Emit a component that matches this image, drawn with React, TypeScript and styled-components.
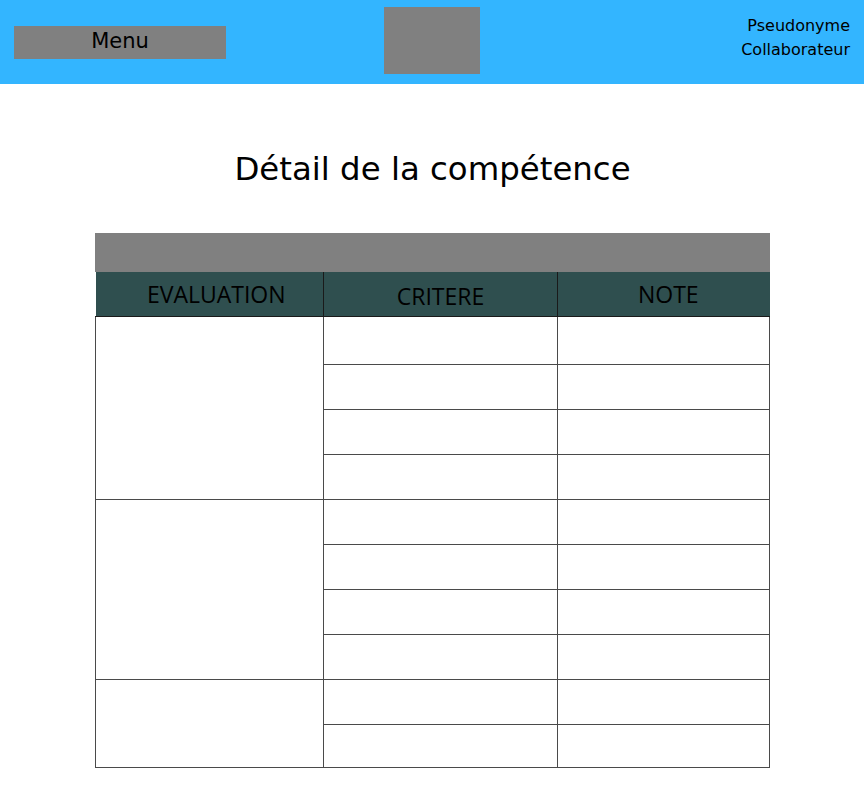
import React from "react";
import styled, { createGlobalStyle } from "styled-components";

const Global = createGlobalStyle`
  html, body { margin: 0; padding: 0; background: #ffffff; }
  body { font-family: "DejaVu Sans", sans-serif; color: #000; }
`;

const TopBar = styled.header`
  display: grid;
  grid-template-columns: 1fr auto 1fr;
  align-items: center;
  height: 84px;
  width: 864px;
  padding: 0 14px;
  box-sizing: border-box;
  background: #33b5ff;
`;

const MenuButton = styled.div`
  justify-self: start;
  width: 212px;
  height: 33px;
  padding-bottom: 3px;
  box-sizing: border-box;
  background: #808080;
  display: flex;
  align-items: center;
  justify-content: center;
  font-size: 21px;
  color: #000;
`;

const LogoBox = styled.div`
  width: 96px;
  height: 67px;
  margin-top: -3px;
  background: #808080;
`;

const UserInfo = styled.div`
  justify-self: end;
  text-align: right;
  font-size: 16px;
  line-height: 24px;
  margin-top: -8px;
`;

const Main = styled.main`
  padding-top: 67px;
`;

const Title = styled.h1`
  margin: 0;
  text-align: center;
  font-size: 32.4px;
  font-weight: normal;
  line-height: 37px;
`;

const Table = styled.table`
  margin: 45px 0 0 95px;
  width: 674px;
  border-collapse: collapse;
  table-layout: fixed;
`;

const Bar = styled.caption`
  height: 39px;
  background: #808080;
`;

const HeadCell = styled.th<{ $w: number; $dy: number; $dx: number }>`
  width: ${(p) => p.$w}px;
  height: 44px;
  padding: ${(p) => p.$dy}px 0 0 ${(p) => p.$dx}px;
  box-sizing: border-box;
  background: #2f4f4f;
  font-family: "Open Sans", sans-serif;
  font-weight: normal;
  font-size: 23px;
  color: #000;
  text-align: center;
  border-left: 1px solid #1a1a1a;
  border-bottom: 1px solid #1a1a1a;
  &:first-child { border-left: none; }
`;

const Cell = styled.td<{ $h: number }>`
  height: ${(p) => p.$h}px;
  padding: 0;
  box-sizing: border-box;
  border: 1px solid #4a4a4a;
`;

type Group = { heights: number[] };
const groups: Group[] = [
  { heights: [48, 45, 45, 45] },
  { heights: [45, 45, 45, 45] },
  { heights: [45, 43] },
];

export default function App() {
  return (
    <>
      <Global />
      <TopBar>
        <MenuButton>Menu</MenuButton>
        <LogoBox />
        <UserInfo>
          <div>Pseudonyme</div>
          <div>Collaborateur</div>
        </UserInfo>
      </TopBar>
      <Main>
        <Title>Détail de la compétence</Title>
        <Table>
          <Bar />
          <thead>
            <tr>
              <HeadCell $w={228} $dy={0} $dx={14}>EVALUATION</HeadCell>
              <HeadCell $w={234} $dy={4} $dx={0}>CRITERE</HeadCell>
              <HeadCell $w={212} $dy={0} $dx={9}>NOTE</HeadCell>
            </tr>
          </thead>
          <tbody>
            {groups.map((g, gi) =>
              g.heights.map((h, ri) => (
                <tr key={`${gi}-${ri}`}>
                  {ri === 0 && <Cell $h={h} rowSpan={g.heights.length} />}
                  <Cell $h={h} />
                  <Cell $h={h} />
                </tr>
              ))
            )}
          </tbody>
        </Table>
      </Main>
    </>
  );
}
